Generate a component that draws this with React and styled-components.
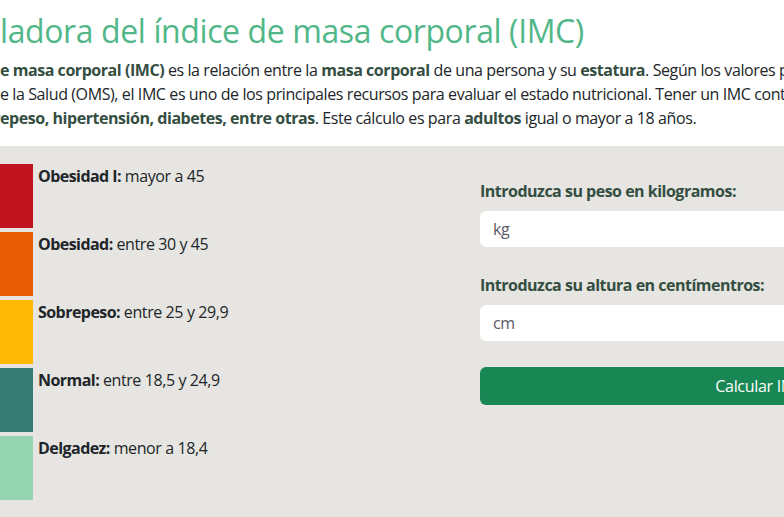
import React from 'react';
import styled, { createGlobalStyle } from 'styled-components';

const GlobalStyle = createGlobalStyle`
  html, body {
    margin: 0;
    padding: 0;
    background: #ffffff;
  }
  body {
    font-family: "Open Sans", "Noto Sans", sans-serif;
    color: #212529;
    font-size: 16px;
    line-height: 1.5;
    letter-spacing: -0.4px;
  }
`;

// the page is wider than the window and scrolled a little to the right
const Viewport = styled.div`
  width: 784px;
  height: 517px;
  overflow: hidden;
  background: #ffffff;
`;

const Content = styled.div`
  width: 1300px;
  margin-left: -84px;
`;

// start of a word that sits left of the visible area
const Clipped = styled.span`
  display: inline-block;
  width: 84px;
  text-align: right;
  white-space: nowrap;
  vertical-align: top;
`;

const Header = styled.header`
  padding: 12px 0 0;
`;

const Title = styled.h1`
  margin: 0 0 8px;
  font-size: 32px;
  font-weight: 500;
  line-height: 1.2;
  letter-spacing: -0.4px;
  color: #52b788;
  white-space: nowrap;
`;

const Intro = styled.p`
  margin: 0 0 16px;
  line-height: 24px;
`;

const Line = styled.span`
  display: block;
  white-space: nowrap;
`;

const Strong = styled.b`
  font-weight: 700;
  letter-spacing: -0.45px;
  color: #344e41;
`;

const Calculator = styled.section`
  display: grid;
  grid-template-columns: 526px 560px;
  padding: 18px 0 40px 38px;
  background: #e6e5e1;
  min-height: 400px;
`;

const Scale = styled.ul`
  list-style: none;
  margin: 0;
  padding: 0;
  display: flex;
  flex-direction: column;
  gap: 4px;
`;

const Range = styled.li`
  display: flex;
  align-items: flex-start;
  gap: 5px;
  height: 64px;
`;

const Swatch = styled.span`
  width: 79px;
  height: 64px;
  background: ${p => p.color};
  flex-shrink: 0;
`;

const RangeText = styled.span`
  line-height: 24px;
`;

const RangeName = styled.b`
  font-weight: 700;
  letter-spacing: -0.55px;
  color: #212529;
`;

const Form = styled.form`
  padding-top: 15px;
  display: flex;
  flex-direction: column;
`;

const Field = styled.div`
  display: flex;
  flex-direction: column;
  gap: 8px;
  margin-bottom: 26px;
`;

const Label = styled.label`
  font-weight: 700;
  line-height: 24px;
  letter-spacing: -0.5px;
  color: #344e41;
`;

const Input = styled.input`
  box-sizing: border-box;
  height: 36px;
  padding: 6px 12px;
  border: 1px solid #ffffff;
  border-radius: 6px;
  background: #ffffff;
  font-family: inherit;
  font-size: 16px;
  letter-spacing: inherit;
  color: #212529;
  outline: none;

  &::placeholder {
    color: #5c5866;
  }
`;

const Button = styled.button`
  height: 38px;
  border: none;
  border-radius: 6px;
  background: #198754;
  color: #ffffff;
  font-family: inherit;
  font-size: 16px;
  letter-spacing: -0.3px;
  cursor: pointer;
`;

const ranges = [
  { name: 'Obesidad I:', text: 'mayor a 45', color: '#c1121f' },
  { name: 'Obesidad:', text: 'entre 30 y 45', color: '#e85d04' },
  { name: 'Sobrepeso:', text: 'entre 25 y 29,9', color: '#ffba08' },
  { name: 'Normal:', text: 'entre 18,5 y 24,9', color: '#367b73' },
  { name: 'Delgadez:', text: 'menor a 18,4', color: '#95d5b2' },
];

const App = () => {
  return (
    <>
      <GlobalStyle />
      <Viewport>
        <Content>
          <Header>
            <Title>
              <Clipped>Calcu</Clipped>ladora del índice de masa corporal (IMC)
            </Title>
            <Intro>
              <Line>
                <Clipped>El índice <Strong>d</Strong></Clipped>
                <Strong>e masa corporal (IMC)</Strong> es la relación entre la{' '}
                <Strong>masa corporal</Strong> de una persona y su <Strong>estatura</Strong>. Según los
                valores propuestos por la Organización
              </Line>
              <Line>
                <Clipped>Mundial d</Clipped>e la Salud (OMS), el IMC es uno de los principales
                recursos para evaluar el estado nutricional. Tener un IMC controlado ayuda a prevenir
                enfermedades
              </Line>
              <Line>
                <Clipped>de <Strong>sobr</Strong></Clipped>
                <Strong>epeso, hipertensión, diabetes, entre otras</Strong>. Este cálculo es para{' '}
                <Strong>adultos</Strong> igual o mayor a 18 años.
              </Line>
            </Intro>
          </Header>

          <Calculator>
            <Scale>
              {ranges.map(r => (
                <Range key={r.name}>
                  <Swatch color={r.color} />
                  <RangeText>
                    <RangeName>{r.name}</RangeName> {r.text}
                  </RangeText>
                </Range>
              ))}
            </Scale>

            <Form onSubmit={e => e.preventDefault()}>
              <Field>
                <Label htmlFor="peso">Introduzca su peso en kilogramos:</Label>
                <Input id="peso" type="text" placeholder="kg" />
              </Field>
              <Field>
                <Label htmlFor="altura">Introduzca su altura en centímentros:</Label>
                <Input id="altura" type="text" placeholder="cm" />
              </Field>
              <Button type="submit">Calcular IMC</Button>
            </Form>
          </Calculator>
        </Content>
      </Viewport>
    </>
  );
};

export default App;
